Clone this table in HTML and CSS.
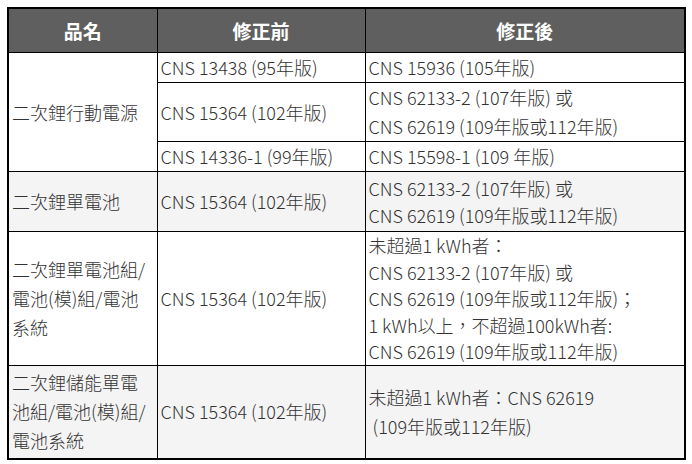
FILE: index.html
```html
<!DOCTYPE html>
<html lang="zh-Hant">
<head>
<meta charset="utf-8">
<link rel="stylesheet" href="styles.css">
</head>
<body>
<table class="spec">
  <colgroup>
    <col class="c1"><col class="c2"><col class="c3">
  </colgroup>
  <thead>
    <tr><th>品名</th><th>修正前</th><th>修正後</th></tr>
  </thead>
  <tbody class="g1">
    <tr>
      <td rowspan="3">二次鋰行動電源</td>
      <td>CNS 13438 (95年版)</td>
      <td>CNS 15936 (105年版)</td>
    </tr>
    <tr>
      <td>CNS 15364 (102年版)</td>
      <td>CNS 62133-2 (107年版) 或<br>CNS 62619 (109年版或112年版)</td>
    </tr>
    <tr>
      <td>CNS 14336-1 (99年版)</td>
      <td>CNS 15598-1 (109 年版)</td>
    </tr>
  </tbody>
  <tbody class="g2 shade">
    <tr>
      <td>二次鋰單電池</td>
      <td>CNS 15364 (102年版)</td>
      <td class="tight">CNS 62133-2 (107年版) 或<br>CNS 62619 (109年版或112年版)</td>
    </tr>
  </tbody>
  <tbody class="g3">
    <tr>
      <td class="multi">二次鋰單電池組/<br>電池(模)組/電池<br>系統</td>
      <td>CNS 15364 (102年版)</td>
      <td class="dense">未超過1 kWh者：<br>CNS 62133-2 (107年版) 或<br>CNS 62619 (109年版或112年版)；<br>1 kWh以上，不超過100kWh者:<br>CNS 62619 (109年版或112年版)</td>
    </tr>
  </tbody>
  <tbody class="g4 shade">
    <tr>
      <td class="multi">二次鋰儲能單電<br>池組/電池(模)組/<br>電池系統</td>
      <td>CNS 15364 (102年版)</td>
      <td class="multi">未超過1 kWh者：CNS 62619<br>&nbsp;(109年版或112年版)</td>
    </tr>
  </tbody>
</table>
</body>
</html>
```

FILE: styles.css
```css
html, body {
  margin: 0;
  padding: 0;
  background: #ffffff;
}
body {
  padding: 7px 0 0 7px;
  font-family: "Noto Sans CJK TC", "Noto Sans", sans-serif;
  color: #333;
}
.spec {
  border-collapse: collapse;
  width: 679px;
  table-layout: fixed;
  border: 2px solid #000;
}
.c1 { width: 149px; }
.c2 { width: 208px; }
.c3 { width: auto; }
.spec th {
  background: #5f5f5f;
  color: #fff;
  font-size: 19px;
  font-weight: 700;
  height: 43px;
  padding: 0;
  border: 1px solid #000;
  text-align: center;
  vertical-align: middle;
}
.spec td {
  border: 1px solid #000;
  font-family: "Noto Sans CJK TC Light", "Noto Sans CJK TC DemiLight", "Noto Sans CJK TC", "Noto Sans", sans-serif;
  font-size: 18px;
  font-weight: 300;
  line-height: 29px;
  padding: 0 2px 0 3px;
  vertical-align: middle;
  white-space: nowrap;
}
.shade td { background: #f4f4f4; }
.g2 td { height: 59px; }
.tight { line-height: 27px !important; }
.dense { line-height: 26.5px !important; }
.multi { line-height: 29px !important; }
.g4 td { height: 92px; }
```
